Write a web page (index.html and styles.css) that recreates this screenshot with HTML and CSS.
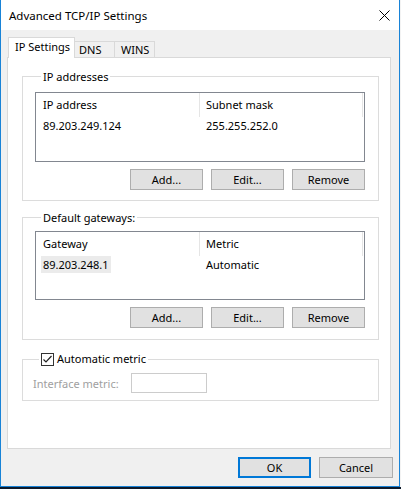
FILE: index.html
```html
<!DOCTYPE html>
<html lang="en">
<head>
    <meta charset="UTF-8">
    <title>Advanced TCP/IP Settings</title>
    <link rel="stylesheet" href="styles.css">
</head>
<body>
    <div class="window">
        <div class="titlebar">
            <span class="title">Advanced TCP/IP Settings</span>
            <svg class="close" width="11" height="11" viewBox="0 0 11 11">
                <path d="M0.5 0.5 L10.5 10.5 M10.5 0.5 L0.5 10.5" stroke="#000" stroke-width="1" fill="none"/>
            </svg>
        </div>

        <div class="client">
            <div class="tabs">
                <div class="tab active">IP Settings</div>
                <div class="tab">DNS</div>
                <div class="tab tab-wins">WINS</div>
            </div>

            <div class="panel">
                <fieldset class="group group-ip">
                    <legend>IP addresses</legend>
                    <div class="list">
                        <div class="list-head">
                            <div class="col">IP address</div>
                            <div class="col">Subnet mask</div>
                        </div>
                        <div class="list-row">
                            <div class="cell">89.203.249.124</div>
                            <div class="cell">255.255.252.0</div>
                        </div>
                    </div>
                    <div class="btn-row">
                        <button class="btn">Add...</button>
                        <button class="btn">Edit...</button>
                        <button class="btn">Remove</button>
                    </div>
                </fieldset>

                <fieldset class="group group-gw">
                    <legend>Default gateways:</legend>
                    <div class="list list-short">
                        <div class="list-head">
                            <div class="col">Gateway</div>
                            <div class="col">Metric</div>
                        </div>
                        <div class="list-row">
                            <div class="cell"><span class="selected">89.203.248.1</span></div>
                            <div class="cell">Automatic</div>
                        </div>
                    </div>
                    <div class="btn-row">
                        <button class="btn">Add...</button>
                        <button class="btn">Edit...</button>
                        <button class="btn">Remove</button>
                    </div>
                </fieldset>

                <fieldset class="group group-metric">
                    <legend>
                        <span class="checkbox">
                            <svg width="13" height="13" viewBox="0 0 13 13">
                                <rect x="0.5" y="0.5" width="12" height="12" fill="#fff" stroke="#333"/>
                                <path d="M2.5 6.5 L5 9 L10.5 3" stroke="#222" stroke-width="1.2" fill="none"/>
                            </svg>
                        </span>Automatic metric
                    </legend>
                    <div class="metric-row">
                        <span class="disabled">Interface metric:</span>
                        <span class="input"></span>
                    </div>
                </fieldset>
            </div>

            <div class="footer">
                <button class="btn btn-default">OK</button>
                <button class="btn">Cancel</button>
            </div>
        </div>
    </div>
    <div class="desktop"></div>
</body>
</html>
```

FILE: styles.css
```css
body {
    margin: 0;
    width: 401px;
    height: 489px;
    overflow: hidden;
    background-color: #f3f3f3;
    font-family: "Noto Sans", sans-serif;
    font-size: 11px;
    color: #000;
}

.window {
    width: 398px;
    border-left: 1px solid #1883d7;
    border-right: 1px solid #1883d7;
    border-bottom: 1px solid #1883d7;
    background-color: #f0f0f0;
}

.titlebar {
    height: 30px;
    background-color: #fff;
    display: flex;
    align-items: center;
    justify-content: space-between;
    padding: 0 9px 0 8px;
}

.title {
    font-size: 11.5px;
    margin-top: 1px;
}

.close {
    display: block;
}

.client {
    height: 456px;
    box-sizing: border-box;
    padding: 7px 0 0 6px;
    display: flex;
    flex-direction: column;
}

/* tab strip */
.tabs {
    display: flex;
    align-items: flex-end;
    margin-left: 1px;
    height: 20px;
}

.tab {
    height: 16px;
    box-sizing: border-box;
    width: 40px;
    padding-left: 4px;
    border-top: 1px solid #d9d9d9;
    border-right: 1px solid #d9d9d9;
    line-height: 16px;
}

.tab-wins {
    padding-left: 6px;
}

.tab.active {
    position: relative;
    z-index: 1;
    width: 67px;
    height: 21px;
    margin-bottom: -1px;
    padding-left: 6px;
    border-left: 1px solid #d9d9d9;
    background-color: #fff;
    line-height: 18px;
}

.panel {
    width: 384px;
    height: 392px;
    box-sizing: border-box;
    border: 1px solid #d9d9d9;
    background-color: #fff;
    display: flex;
    flex-direction: column;
}

/* group boxes */
.group {
    width: 357px;
    box-sizing: border-box;
    margin: 0 0 0 14px;
    padding: 0 13px 10px 12px;
    border: 1px solid #dcdcdc;
    min-width: 0;
}

.group legend {
    margin-left: 6px;
    padding: 2px 2px 0;
    line-height: 16px;
    display: flex;
    align-items: center;
}

.group-ip {
    margin-top: 9px;
}

.group-gw {
    margin-top: 7px;
    padding-bottom: 11px;
}

.group-metric {
    margin-top: 11px;
    padding: 0 0 7px 10px;
}

.group-metric legend {
    padding-top: 0;
}

/* list views */
.list {
    margin-top: 7px;
    height: 70px;
    box-sizing: border-box;
    border: 1px solid #828790;
    background-color: #fff;
}

.list-short {
    margin-top: 5px;
    height: 69px;
}

.list-head,
.list-row {
    display: grid;
    grid-template-columns: 164px 163px;
}

.list-head {
    height: 24px;
}

.col {
    border-right: 1px solid #e5e5e5;
    padding-left: 6px;
    line-height: 24px;
}

.col:first-child,
.cell:first-child {
    padding-left: 7px;
}

.list-row {
    height: 17px;
    line-height: 17px;
}

.cell {
    padding-left: 6px;
}

.selected {
    display: inline-block;
    margin-left: -2px;
    padding: 0 3px 0 2px;
    background-color: #ebebeb;
}

/* push buttons */
.btn-row {
    display: flex;
    justify-content: flex-end;
    gap: 8px;
    margin-top: 7px;
}

.btn {
    width: 73px;
    height: 21px;
    box-sizing: border-box;
    padding: 0;
    border: 1px solid #adadad;
    background-color: #e1e1e1;
    font-family: inherit;
    font-size: 11px;
    color: #000;
}

.btn-default {
    border: 2px solid #0078d7;
}

.checkbox {
    display: inline-flex;
    margin-right: 3px;
}

.checkbox svg {
    display: block;
}

.metric-row {
    display: flex;
    align-items: center;
    margin-top: 6px;
}

.disabled {
    width: 98px;
    color: #a0a0a0;
}

.input {
    width: 76px;
    height: 20px;
    box-sizing: border-box;
    border: 1px solid #cccccc;
    background-color: #fff;
}

.footer {
    display: flex;
    justify-content: flex-end;
    gap: 8px;
    margin-top: 8px;
    padding-right: 6px;
}

.footer .btn:last-child {
    width: 74px;
}

.desktop {
    height: 2px;
    background-color: #0d1a2b;
}
```
